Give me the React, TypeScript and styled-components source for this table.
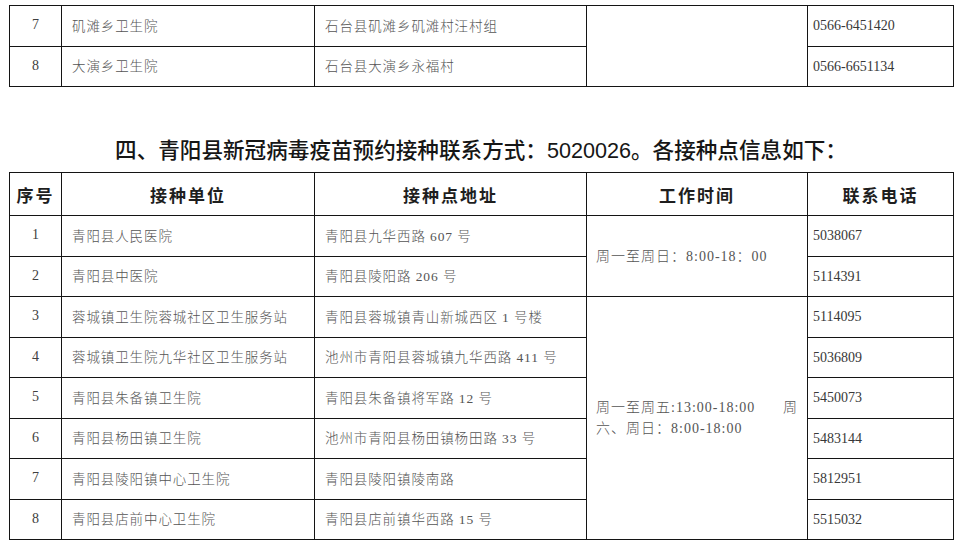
import React from "react";
import styled, { createGlobalStyle } from "styled-components";

const GlobalStyle = createGlobalStyle`
  html, body {
    margin: 0;
    padding: 0;
    background: #ffffff;
  }
`;

const LINE = "#141414";
const SONG = `"Liberation Serif", "Noto Sans CJK SC", serif`;

const topRows = [
  { no: 7, unit: "矶滩乡卫生院", addr: "石台县矶滩乡矶滩村汪村组", tel: "0566-6451420" },
  { no: 8, unit: "大演乡卫生院", addr: "石台县大演乡永福村", tel: "0566-6651134" },
];

const rows = [
  { no: 1, unit: "青阳县人民医院", addr: "青阳县九华西路 607 号", tel: "5038067" },
  { no: 2, unit: "青阳县中医院", addr: "青阳县陵阳路 206 号", tel: "5114391" },
  { no: 3, unit: "蓉城镇卫生院蓉城社区卫生服务站", addr: "青阳县蓉城镇青山新城西区 1 号楼", tel: "5114095" },
  { no: 4, unit: "蓉城镇卫生院九华社区卫生服务站", addr: "池州市青阳县蓉城镇九华西路 411 号", tel: "5036809" },
  { no: 5, unit: "青阳县朱备镇卫生院", addr: "青阳县朱备镇将军路 12 号", tel: "5450073" },
  { no: 6, unit: "青阳县杨田镇卫生院", addr: "池州市青阳县杨田镇杨田路 33 号", tel: "5483144" },
  { no: 7, unit: "青阳县陵阳镇中心卫生院", addr: "青阳县陵阳镇陵南路", tel: "5812951" },
  { no: 8, unit: "青阳县店前中心卫生院", addr: "青阳县店前镇华西路 15 号", tel: "5515032" },
];

export default function App() {
  return (
    <>
      <GlobalStyle />
      <Page>
        <Table>
          <Cols />
          <tbody>
            {topRows.map((r, i) => (
              <Row key={r.no} h={i === 0 ? 41 : 40}>
                <NoCell>{r.no}</NoCell>
                <Cell>{r.unit}</Cell>
                <Cell>{r.addr}</Cell>
                {i === 0 && <Cell rowSpan={2} />}
                <TelCell>{r.tel}</TelCell>
              </Row>
            ))}
          </tbody>
        </Table>

        <Title>四、青阳县新冠病毒疫苗预约接种联系方式：5020026。各接种点信息如下：</Title>

        <Table>
          <Cols />
          <thead>
            <Row h={43}>
              <Head>序号</Head>
              <Head>接种单位</Head>
              <Head>接种点地址</Head>
              <Head>工作时间</Head>
              <Head>联系电话</Head>
            </Row>
          </thead>
          <tbody>
            {rows.map((r, i) => (
              <Row key={r.no} h={i % 2 === 0 ? 41 : 40}>
                <NoCell>{r.no}</NoCell>
                <Cell>{r.unit}</Cell>
                <Cell>{r.addr}</Cell>
                {i === 0 && (
                  <TimeCell rowSpan={2}>周一至周日：8:00-18：00</TimeCell>
                )}
                {i === 2 && (
                  <TimeCell rowSpan={6}>
                    <SpreadLine>
                      <span>周一至周五:13:00-18:00</span>
                      <span>周</span>
                    </SpreadLine>
                    <div>六、周日：8:00-18:00</div>
                  </TimeCell>
                )}
                <TelCell>{r.tel}</TelCell>
              </Row>
            ))}
          </tbody>
        </Table>
      </Page>
    </>
  );
}

function Cols() {
  return (
    <colgroup>
      <col style={{ width: 52 }} />
      <col style={{ width: 253 }} />
      <col style={{ width: 272 }} />
      <col style={{ width: 221 }} />
      <col style={{ width: 146 }} />
    </colgroup>
  );
}

const Page = styled.div`
  display: flex;
  flex-direction: column;
  padding: 5px 0 0 9px;
  width: 944px;
`;

const Table = styled.table`
  width: 945px;
  border-collapse: collapse;
  table-layout: fixed;
  font-family: ${SONG};
`;

const Row = styled.tr<{ h: number }>`
  height: ${({ h }) => h}px;
`;

const Cell = styled.td`
  border: 1px solid ${LINE};
  padding: 0 0 3px 10px;
  font-size: 13.5px;
  font-weight: 300;
  letter-spacing: 0.9px;
  color: #555555;
  white-space: nowrap;
  vertical-align: middle;
  text-align: left;
`;

const NoCell = styled(Cell)`
  padding: 0 0 2px 0;
  text-align: center;
  font-size: 14px;
  letter-spacing: 0;
  color: #404040;
`;

const TelCell = styled(Cell)`
  padding: 0 0 0 5px;
  font-size: 14px;
  letter-spacing: 0;
  color: #383838;
`;

const TimeCell = styled(Cell)`
  padding: 0 9px 0 9px;
  font-size: 14px;
  line-height: 21px;
  letter-spacing: 1px;
`;

const SpreadLine = styled.div`
  display: flex;
  justify-content: space-between;
`;

const Head = styled.th`
  border: 1px solid ${LINE};
  padding: 0;
  font-family: ${SONG};
  font-size: 17px;
  font-weight: 700;
  letter-spacing: 2px;
  color: #1e1e1e;
  text-align: center;
  vertical-align: middle;
`;

const Title = styled.h2`
  margin: 49px 0 6px 0;
  height: 30px;
  line-height: 30px;
  text-align: center;
  font-family: "Liberation Sans", "Noto Sans CJK SC", sans-serif;
  font-size: 21.6px;
  font-weight: 500;
  color: #161616;
  white-space: nowrap;
`;
